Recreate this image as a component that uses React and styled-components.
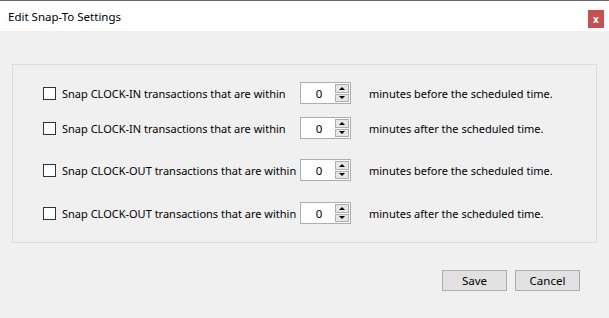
import React from "react";
import styled, { createGlobalStyle } from "styled-components";

const GlobalStyle = createGlobalStyle`
  html, body {
    margin: 0;
    padding: 0;
    background: #f0f0f0;
  }
  body {
    font-family: "Noto Sans", "Open Sans", sans-serif;
    font-size: 11px;
    color: #000;
  }
`;

const Window = styled.div`
  width: 609px;
  height: 318px;
  display: flex;
  flex-direction: column;
  background: #f0f0f0;
  border-top: 1px solid #6a6a6a;
  box-sizing: border-box;
`;

const TitleBar = styled.div`
  height: 30px;
  background: #fff;
  display: flex;
  align-items: center;
  justify-content: space-between;
  padding: 0 5px 0 8px;
`;

const Title = styled.span`
  font-size: 11.5px;
`;

const CloseButton = styled.div`
  width: 16px;
  height: 18px;
  background: #c75050;
  color: #fff;
  font-weight: bold;
  font-size: 10px;
  display: flex;
  align-items: center;
  justify-content: center;
  margin-top: 5px;
`;

const Body = styled.div`
  flex: 1;
  display: flex;
  flex-direction: column;
  padding: 33px 12px 0 12px;
`;

const GroupBox = styled.div`
  height: 179px;
  border: 1px solid #dcdcdc;
  box-sizing: border-box;
  padding: 17px 0 0 30px;
  display: flex;
  flex-direction: column;
`;

const Row = styled.div`
  display: grid;
  grid-template-columns: 257px 51px auto;
  align-items: center;
  margin-top: ${(p) => p.$gap}px;
`;

const CheckLabel = styled.label`
  display: flex;
  align-items: center;
  gap: 6px;
  white-space: nowrap;
`;

const Box = styled.span`
  width: 13px;
  height: 13px;
  box-sizing: border-box;
  border: 1px solid #333;
  background: #fff;
  flex: none;
`;

const Spinner = styled.div`
  width: 51px;
  height: 22px;
  box-sizing: border-box;
  border: 1px solid #adadad;
  background: #fff;
  display: flex;
  align-items: stretch;
  padding: 1px 1px 1px 0;
`;

const SpinValue = styled.span`
  flex: 1;
  display: flex;
  align-items: center;
  justify-content: center;
  padding-left: 2px;
  font-size: 11.5px;
`;

const SpinButtons = styled.div`
  width: 14px;
  display: flex;
  flex-direction: column;
  gap: 1px;
`;

const SpinButton = styled.div`
  flex: 1;
  background: #e6e6e6;
  border: 1px solid #adadad;
  display: flex;
  align-items: center;
  justify-content: center;
`;

const Arrow = styled.span`
  width: 0;
  height: 0;
  border-left: 3px solid transparent;
  border-right: 3px solid transparent;
  ${(p) =>
    p.$down ? "border-top: 3px solid #000;" : "border-bottom: 3px solid #000;"}
`;

const Suffix = styled.span`
  white-space: nowrap;
  margin-left: 18px;
`;

const Footer = styled.div`
  display: flex;
  justify-content: flex-end;
  gap: 8px;
  padding: 27px 17px 0 0;
`;

const Button = styled.button`
  width: 65px;
  height: 21px;
  background: #e1e1e1;
  border: 1px solid #adadad;
  font-family: inherit;
  font-size: 11.5px;
  padding: 0;
  color: #000;
`;

const rows = [
  { label: "Snap CLOCK-IN transactions that are within", suffix: "minutes before the scheduled time.", gap: 0 },
  { label: "Snap CLOCK-IN transactions that are within", suffix: "minutes after the scheduled time.", gap: 13 },
  { label: "Snap CLOCK-OUT transactions that are within", suffix: "minutes before the scheduled time.", gap: 20 },
  { label: "Snap CLOCK-OUT transactions that are within", suffix: "minutes after the scheduled time.", gap: 21 },
];

function SpinBox({ value }) {
  return (
    <Spinner>
      <SpinValue>{value}</SpinValue>
      <SpinButtons>
        <SpinButton>
          <Arrow />
        </SpinButton>
        <SpinButton>
          <Arrow $down />
        </SpinButton>
      </SpinButtons>
    </Spinner>
  );
}

export default function App() {
  return (
    <>
      <GlobalStyle />
      <Window>
        <TitleBar>
          <Title>Edit Snap-To Settings</Title>
          <CloseButton>x</CloseButton>
        </TitleBar>
        <Body>
          <GroupBox>
            {rows.map((r, i) => (
              <Row key={i} $gap={r.gap}>
                <CheckLabel>
                  <Box />
                  {r.label}
                </CheckLabel>
                <SpinBox value="0" />
                <Suffix>{r.suffix}</Suffix>
              </Row>
            ))}
          </GroupBox>
          <Footer>
            <Button>Save</Button>
            <Button>Cancel</Button>
          </Footer>
        </Body>
      </Window>
    </>
  );
}
